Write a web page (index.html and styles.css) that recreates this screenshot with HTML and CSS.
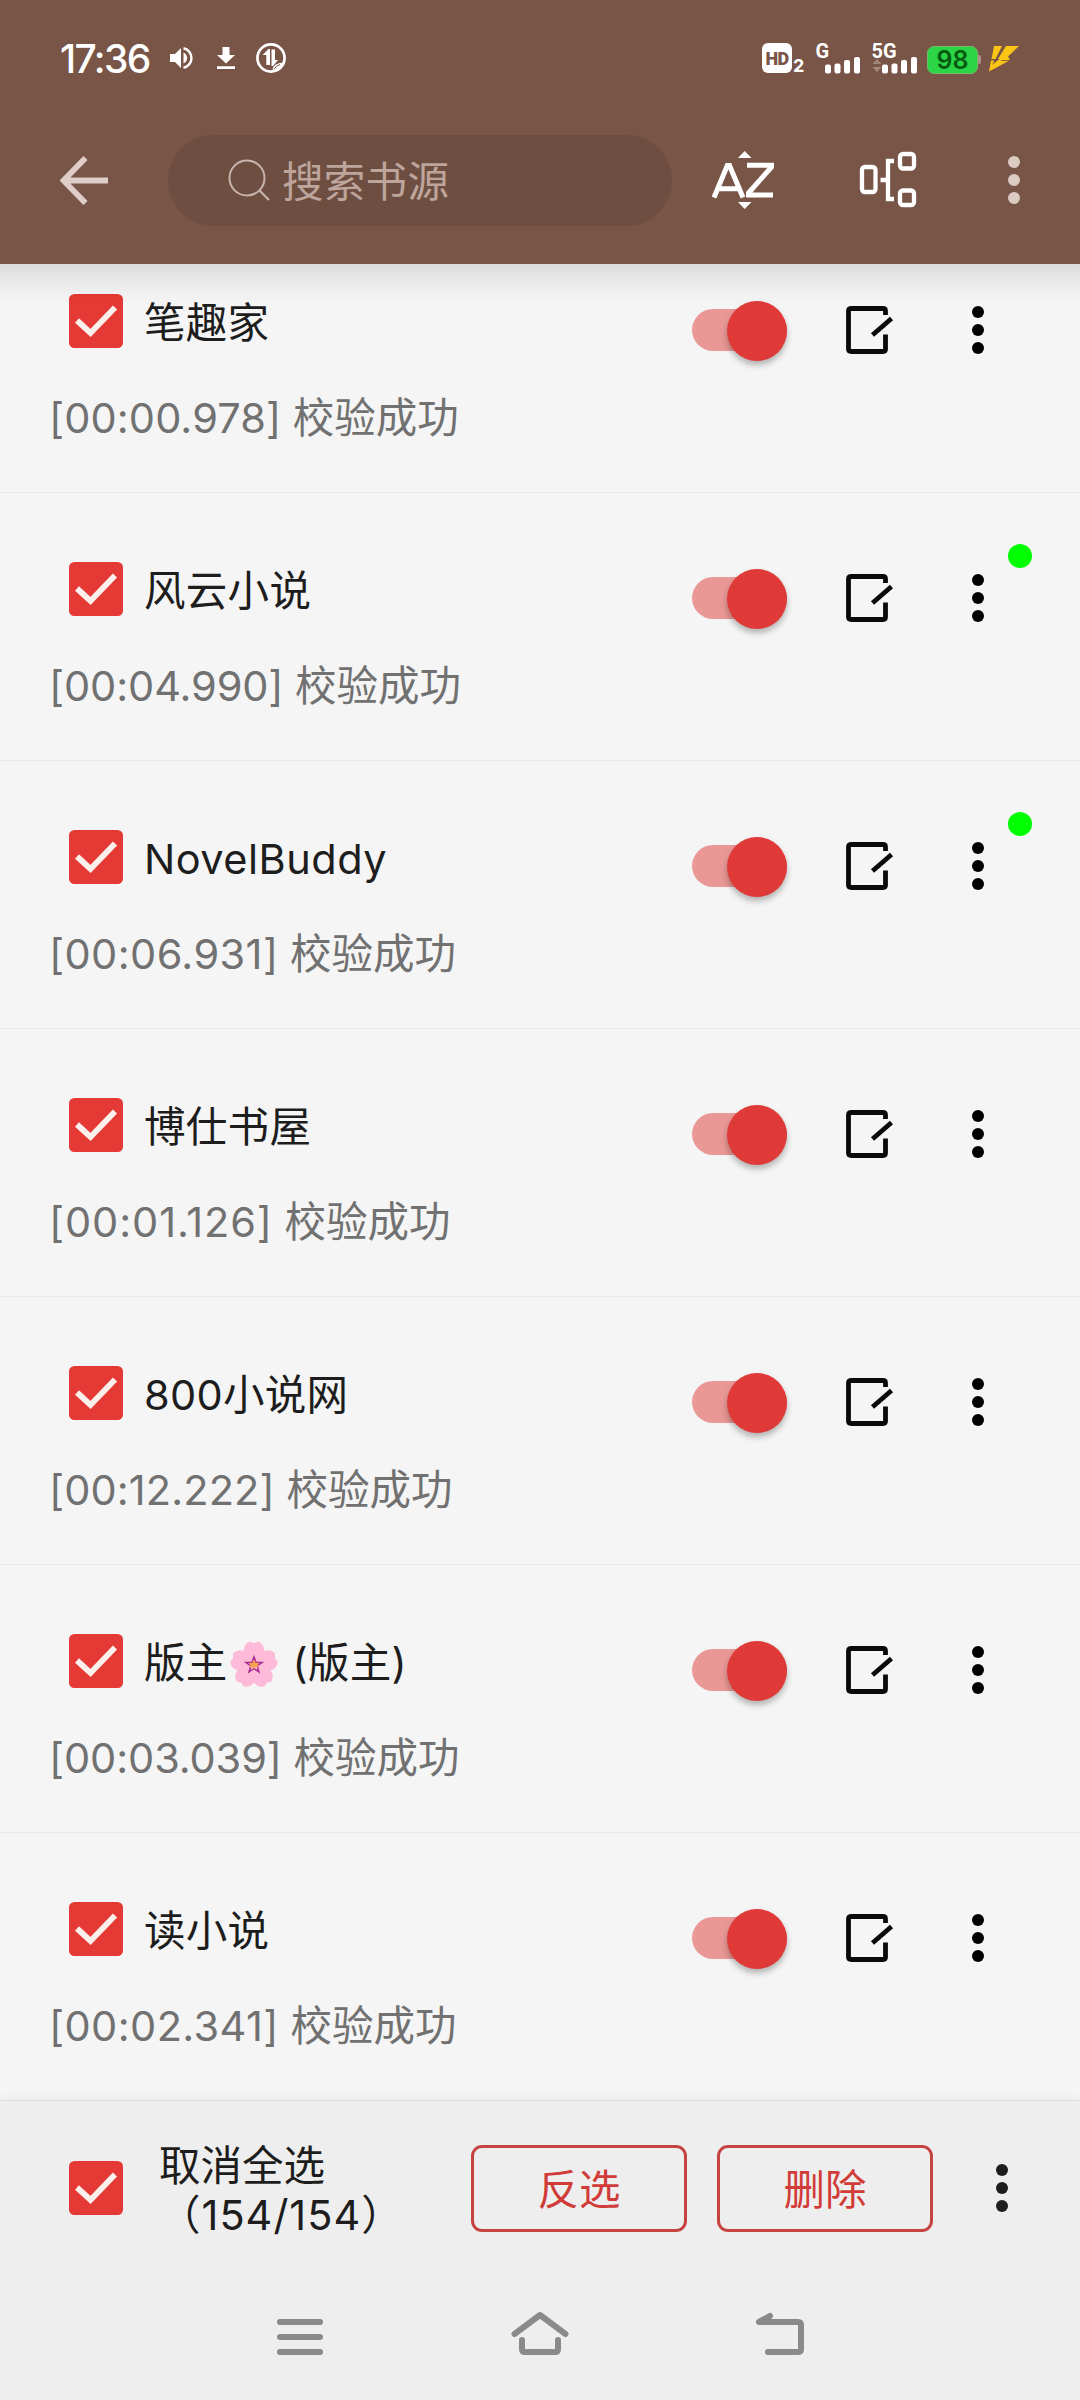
FILE: index.html
```html
<!DOCTYPE html>
<html lang="zh-CN">
<head>
<meta charset="utf-8">
<title>书源管理</title>
<link rel="stylesheet" href="styles.css">
</head>
<body>
<svg class="defs" width="0" height="0">
  <symbol id="check" viewBox="0 0 54 54"><rect width="54" height="54" rx="5.5" fill="#e53935"/><path d="M8 26.500L21.500 39L46 13.500" fill="none" stroke="#fcf0ec" stroke-width="5.800"/></symbol>
  <symbol id="edit" viewBox="0 0 52 52"><path d="M41.500 11V7Q41.500 4.500 39 4.500H7.500Q4.500 4.500 4.500 7V45Q4.500 47.500 7.500 47.500H39Q41.500 47.500 41.500 45V30.500M28.500 31L47.500 14.500" fill="none" stroke="#0a0a0a" stroke-width="4.800"/></symbol>
  <symbol id="dots" viewBox="0 0 12 48"><circle cx="6" cy="6" r="6"/><circle cx="6" cy="24" r="6"/><circle cx="6" cy="42" r="6"/></symbol>
</svg>
<header class="header">
  <div class="status">
    <span class="clock">17:36</span>
    <svg class="volume" width="24" height="24" viewBox="0 0 24 24"><path fill="#fff" d="M1 8h5l6-6v20l-6-6H1zM14.500 6.500a6 6 0 0 1 0 11z"/><path d="M14.500 2.200a10 10 0 0 1 0 19.600" fill="none" stroke="#fff" stroke-width="2.400"/></svg>
    <svg class="download" width="18" height="22" viewBox="0 0 18 22"><path fill="#fff" d="M5.500 0h7v8H18l-9 8.500L0 8h5.500zM0 19.300h18V22H0z"/></svg>
    <svg class="data" width="30" height="30" viewBox="0 0 30 30"><circle cx="15" cy="15" r="13.600" fill="none" stroke="#fff" stroke-width="2.700"/><path fill="#fff" d="M10.300 22V12H6.500l6-6H14v16zM15.500 6.500H19V17h3l-5 6h-1.500z"/><path fill="#fff" d="M16.500 27Q17 20 27.500 19.500L25 26l-7 3z"/><path d="M18 26.500q2-4 6-5" stroke="#795548" fill="none"/></svg>
    <span class="grow"></span>
    <span class="hd">HD</span><span class="hd-sim">2</span>
    <svg class="signals" width="110" height="44" viewBox="0 -5 110 44">
      <g fill="#fff"><rect x="12" y="23.500" width="6" height="9" rx="2"/><rect x="21.500" y="22.500" width="6" height="10" rx="2"/><rect x="31" y="19" width="6" height="13.500" rx="2"/><rect x="41" y="16" width="6" height="16.500" rx="2"/><rect x="69" y="23.500" width="6" height="9" rx="2"/><rect x="78.500" y="22.500" width="6" height="10" rx="2"/><rect x="88" y="19" width="6" height="13.500" rx="2"/><rect x="98" y="16" width="6" height="16.500" rx="2"/></g>
      <path fill="#a4877b" d="M64 18l4.500 5h-9zM64 31l4.500-5h-9z"/>
      <text x="2.500" y="17">G</text><text x="58.500" y="17">5G</text>
    </svg>
    <span class="battery">98</span><span class="nub"></span>
    <svg class="bolt" width="31" height="26" viewBox="0 0 31 26"><path fill="#fac515" d="M5 0H13L6.500 13H2.500zM17 0H30L19 10.500 21 14H13.500L11.500 15 20 14.700 0 25.500 2 14.500H5.500L3 19 10.500 13H9z"/></svg>
  </div>
  <div class="toolbar">
    <svg class="back" width="50" height="50" viewBox="0 0 50 50"><path d="M25.500 3L3.500 25.500L25.500 48M3.500 25.500H48" fill="none" stroke="#dfcdca" stroke-width="5.800"/></svg>
    <div class="search"><svg width="42" height="44" viewBox="0 0 42 44"><circle cx="19" cy="20" r="17.500" fill="none" stroke="#c8b4ae" stroke-width="2"/><path d="M31 32L41 42" stroke="#c8b4ae" stroke-width="2.200"/></svg><span>搜索书源</span></div>
    <svg class="sort" width="64" height="60" viewBox="0 0 64 60"><path fill="#fff" d="M26 8L32.700 1L39.500 8zM26 52H39.500L32.700 59z"/><path d="M2 47.500L15.300 15.500H17.500L31 47.500M6.500 38.800H26.500M35 15.300H59.500V17L36.500 43V45H61" fill="none" stroke="#fff" stroke-width="5"/></svg>
    <svg class="group" width="58" height="58" viewBox="0 0 58 58"><g fill="none" stroke="#fff" stroke-width="4.300"><rect x="3" y="16" width="13.500" height="25" rx="3"/><rect x="41" y="3" width="14" height="14.500" rx="3"/><rect x="41" y="39.500" width="14" height="14.500" rx="3"/><path d="M35 10H29V48H35M21.500 29H29"/></g></svg>
    <svg class="menu" width="12" height="48" fill="#dccbc2"><use href="#dots"/></svg>
  </div>
</header>
<main class="list" id="list">
  <article class="row"><div class="main"><svg class="check"><use href="#check"/></svg><span class="name">笔趣家</span><span class="switch"><i></i></span><svg class="edit"><use href="#edit"/></svg><svg class="more"><use href="#dots"/></svg></div><p class="result"><span>[00:00.978]</span> 校验成功</p></article>
  <article class="row"><div class="main"><svg class="check"><use href="#check"/></svg><span class="name">风云小说</span><span class="switch"><i></i></span><svg class="edit"><use href="#edit"/></svg><svg class="more"><use href="#dots"/></svg></div><p class="result snug"><span>[00:04.990]</span> 校验成功</p><b class="explore"></b></article>
  <article class="row"><div class="main"><svg class="check"><use href="#check"/></svg><span class="name latin">NovelBuddy</span><span class="switch"><i></i></span><svg class="edit"><use href="#edit"/></svg><svg class="more"><use href="#dots"/></svg></div><p class="result loose"><span>[00:06.931]</span> 校验成功</p><b class="explore"></b></article>
  <article class="row"><div class="main"><svg class="check"><use href="#check"/></svg><span class="name">博仕书屋</span><span class="switch"><i></i></span><svg class="edit"><use href="#edit"/></svg><svg class="more"><use href="#dots"/></svg></div><p class="result looser"><span>[00:01.126]</span> 校验成功</p></article>
  <article class="row"><div class="main"><svg class="check"><use href="#check"/></svg><span class="name">800小说网</span><span class="switch"><i></i></span><svg class="edit"><use href="#edit"/></svg><svg class="more"><use href="#dots"/></svg></div><p class="result"><span>[00:12.222]</span> 校验成功</p></article>
  <article class="row"><div class="main"><svg class="check"><use href="#check"/></svg><span class="name">版主<svg class="flower" viewBox="0 0 48 48" role="img"><g id="petals"><path id="petal" fill="#fdbbd9" d="M24 27C10 17 12 4 20 1.500L24 3L28 1.500C36 4 38 17 24 27z"/><use href="#petal" transform="rotate(72 24 25)"/><use href="#petal" transform="rotate(144 24 25)"/><use href="#petal" transform="rotate(216 24 25)"/><use href="#petal" transform="rotate(288 24 25)"/></g><path d="M24 17L26 22.500L32 22.500L27.200 26L29 32L24 28.500L19 32L20.800 26L16 22.500L22 22.500z" fill="#fbc2dc" stroke="#ab298e" stroke-width="1.500"/><path d="M24 20.500v8M20 23.500l8 3M28 23.500l-8 3" stroke="#f7a14c" stroke-width="2.400"/></svg> (版主)</span><span class="switch"><i></i></span><svg class="edit"><use href="#edit"/></svg><svg class="more"><use href="#dots"/></svg></div><p class="result snug"><span>[00:03.039]</span> 校验成功</p></article>
  <article class="row"><div class="main"><svg class="check"><use href="#check"/></svg><span class="name">读小说</span><span class="switch"><i></i></span><svg class="edit"><use href="#edit"/></svg><svg class="more"><use href="#dots"/></svg></div><p class="result loose"><span>[00:02.341]</span> 校验成功</p></article>
</main>
<footer class="footer">
  <div class="actions">
    <svg class="check"><use href="#check"/></svg>
    <div class="select-all">取消全选<br><span class="count">（154/154）</span></div>
    <button>反选</button><button>删除</button>
    <svg class="more"><use href="#dots"/></svg>
  </div>
  <nav class="nav">
    <svg width="60" height="48" viewBox="0 0 60 48"><path d="M10 13H50M10 28H50M10 43H50"/></svg>
    <svg width="60" height="48" viewBox="0 0 60 48"><path d="M4.500 25L30 6L55.500 25M12 31V40Q12 43 15 43H45Q48 43 48 40V31"/></svg>
    <svg width="60" height="48" viewBox="0 0 60 48"><path d="M20 7L9 13H48Q51 13 51 16V40Q51 43 48 43H18"/></svg>
  </nav>
</footer>
</body>
</html>
```
FILE: styles.css
```css
* { box-sizing: border-box; }
body {
  margin: 0;
  width: 1080px;
  height: 2400px;
  overflow: hidden;
  display: flex;
  flex-direction: column;
  background: #f5f5f5;
  color: #1d1d1d;
  font: 41.5px/50px Inter, "Noto Sans CJK SC", sans-serif;
}
svg { display: block; flex: none; }
.defs { position: absolute; }
.grow { flex: 1; }

.header { position: relative; z-index: 1; height: 264px; background: #795547; flex: none; }
.header::after {
  content: "";
  position: absolute;
  left: 0;
  right: 0;
  top: 100%;
  height: 42px;
  background: linear-gradient(rgba(0,0,0,.105), rgba(0,0,0,.055) 35%, rgba(0,0,0,.02) 70%, transparent);
}
.status { height: 116px; padding: 0 60px; display: flex; align-items: center; color: #fff; }
.clock { font-size: 39px; font-weight: 500; width: 108px; letter-spacing: -1.7px; white-space: nowrap; padding-top: 1px; }
.volume { margin-left: 1px; }
.download { margin-left: 24px; }
.data { margin-left: 21px; }
.hd {
  width: 30px;
  height: 30px;
  border-radius: 6px;
  background: #fff;
  color: #795547;
  font: 900 18px/31px Roboto, sans-serif;
  letter-spacing: -.7px;
  text-align: center;
}
.hd-sim { width: 12px; margin: 16px 0 0 1px; font: 700 18px/18px Inter, sans-serif; }
.signals { margin-left: 8px; }
.signals text { font: 700 20px Roboto, sans-serif; fill: #fff; }
.battery {
  margin-left: 4px;
  width: 51px;
  height: 28px;
  border: 1px solid #75b966;
  border-radius: 7px;
  background: #2bd546;
  color: #075b10;
  font: 600 25px/27px Inter, sans-serif;
  text-align: center;
  margin-top: 3px;
}
.nub { width: 3px; height: 9px; background: #a99287; border-radius: 0 2px 2px 0; margin-top: 3px; }
.bolt { margin-left: 8px; margin-top: 1px; }

.toolbar { height: 128px; padding: 0 60px; display: flex; align-items: center; }
.search {
  margin-left: 58px;
  width: 504px;
  height: 91px;
  border-radius: 46px;
  background: #6f4e42;
  display: flex;
  align-items: center;
  padding-left: 60px;
  color: #bda59c;
}
.search span { margin: 3px 0 0 12px; letter-spacing: .3px; }
.sort { margin-left: 40px; }
.group { margin-left: 83px; }
.menu { margin-left: 91px; }

.list { height: 1876px; margin-top: -40px; flex: none; }
.row { position: relative; height: 268px; padding: 60px 0 0; border-top: 1px solid #e8e8e8; }
.main { display: flex; align-items: center; height: 90px; padding-left: 69px; }
.main .check { margin-top: -18px; }
.check { width: 54px; height: 54px; }
.name { margin: -15px 0 0 21px; width: 548px; display: flex; align-items: center; white-space: pre; letter-spacing: .3px; }
.name.latin { letter-spacing: .5px; }
.flower { width: 48px; height: 48px; margin: 2px 3px 0 2px; }
.switch { width: 95px; height: 42px; border-radius: 21px; background: #ea9896; }
.switch i {
  display: block;
  width: 60px;
  height: 60px;
  margin: -8.500px 0 0 35px;
  border-radius: 50%;
  background: #df3a38;
  box-shadow: 0 4px 6px rgba(0,0,0,.28);
}
.edit { width: 52px; height: 52px; margin-left: 57px; }
.more { width: 12px; height: 48px; margin-left: 76px; }
.result { margin: 18px 0 0 49px; color: #717171; white-space: pre; }
.result span { letter-spacing: .1px; }
.result.snug span { letter-spacing: -.1px; }
.result.loose span { letter-spacing: .4px; }
.result.looser span { letter-spacing: .9px; }
.explore {
  position: absolute;
  left: 1008px;
  top: 51px;
  width: 24px;
  height: 24px;
  border-radius: 50%;
  background: #0f0;
}

.footer { height: 300px; background: #eee; border-top: 1px solid #dfdfdf; box-shadow: 0 -2px 8px rgba(0,0,0,.05); position: relative; }
.actions { height: 174px; padding-left: 69px; display: flex; align-items: center; }
.select-all { width: 312px; margin-left: 36px; line-height: 49px; white-space: nowrap; margin-top: 6px; }
.count { letter-spacing: 1px; }
.actions button {
  width: 216px;
  height: 87px;
  margin-right: 30px;
  padding: 3px 0 0;
  border: 3px solid #c54442;
  border-radius: 11px;
  background: transparent;
  color: #d13b38;
  font: inherit;
}
.actions .more { margin-left: 33px; fill: #1d1d1d; }
.nav { display: flex; justify-content: center; gap: 180px; padding-top: 34px; }
.nav path { fill: none; stroke: #8a8a8a; stroke-width: 6; stroke-linecap: round; stroke-linejoin: round; }
```
